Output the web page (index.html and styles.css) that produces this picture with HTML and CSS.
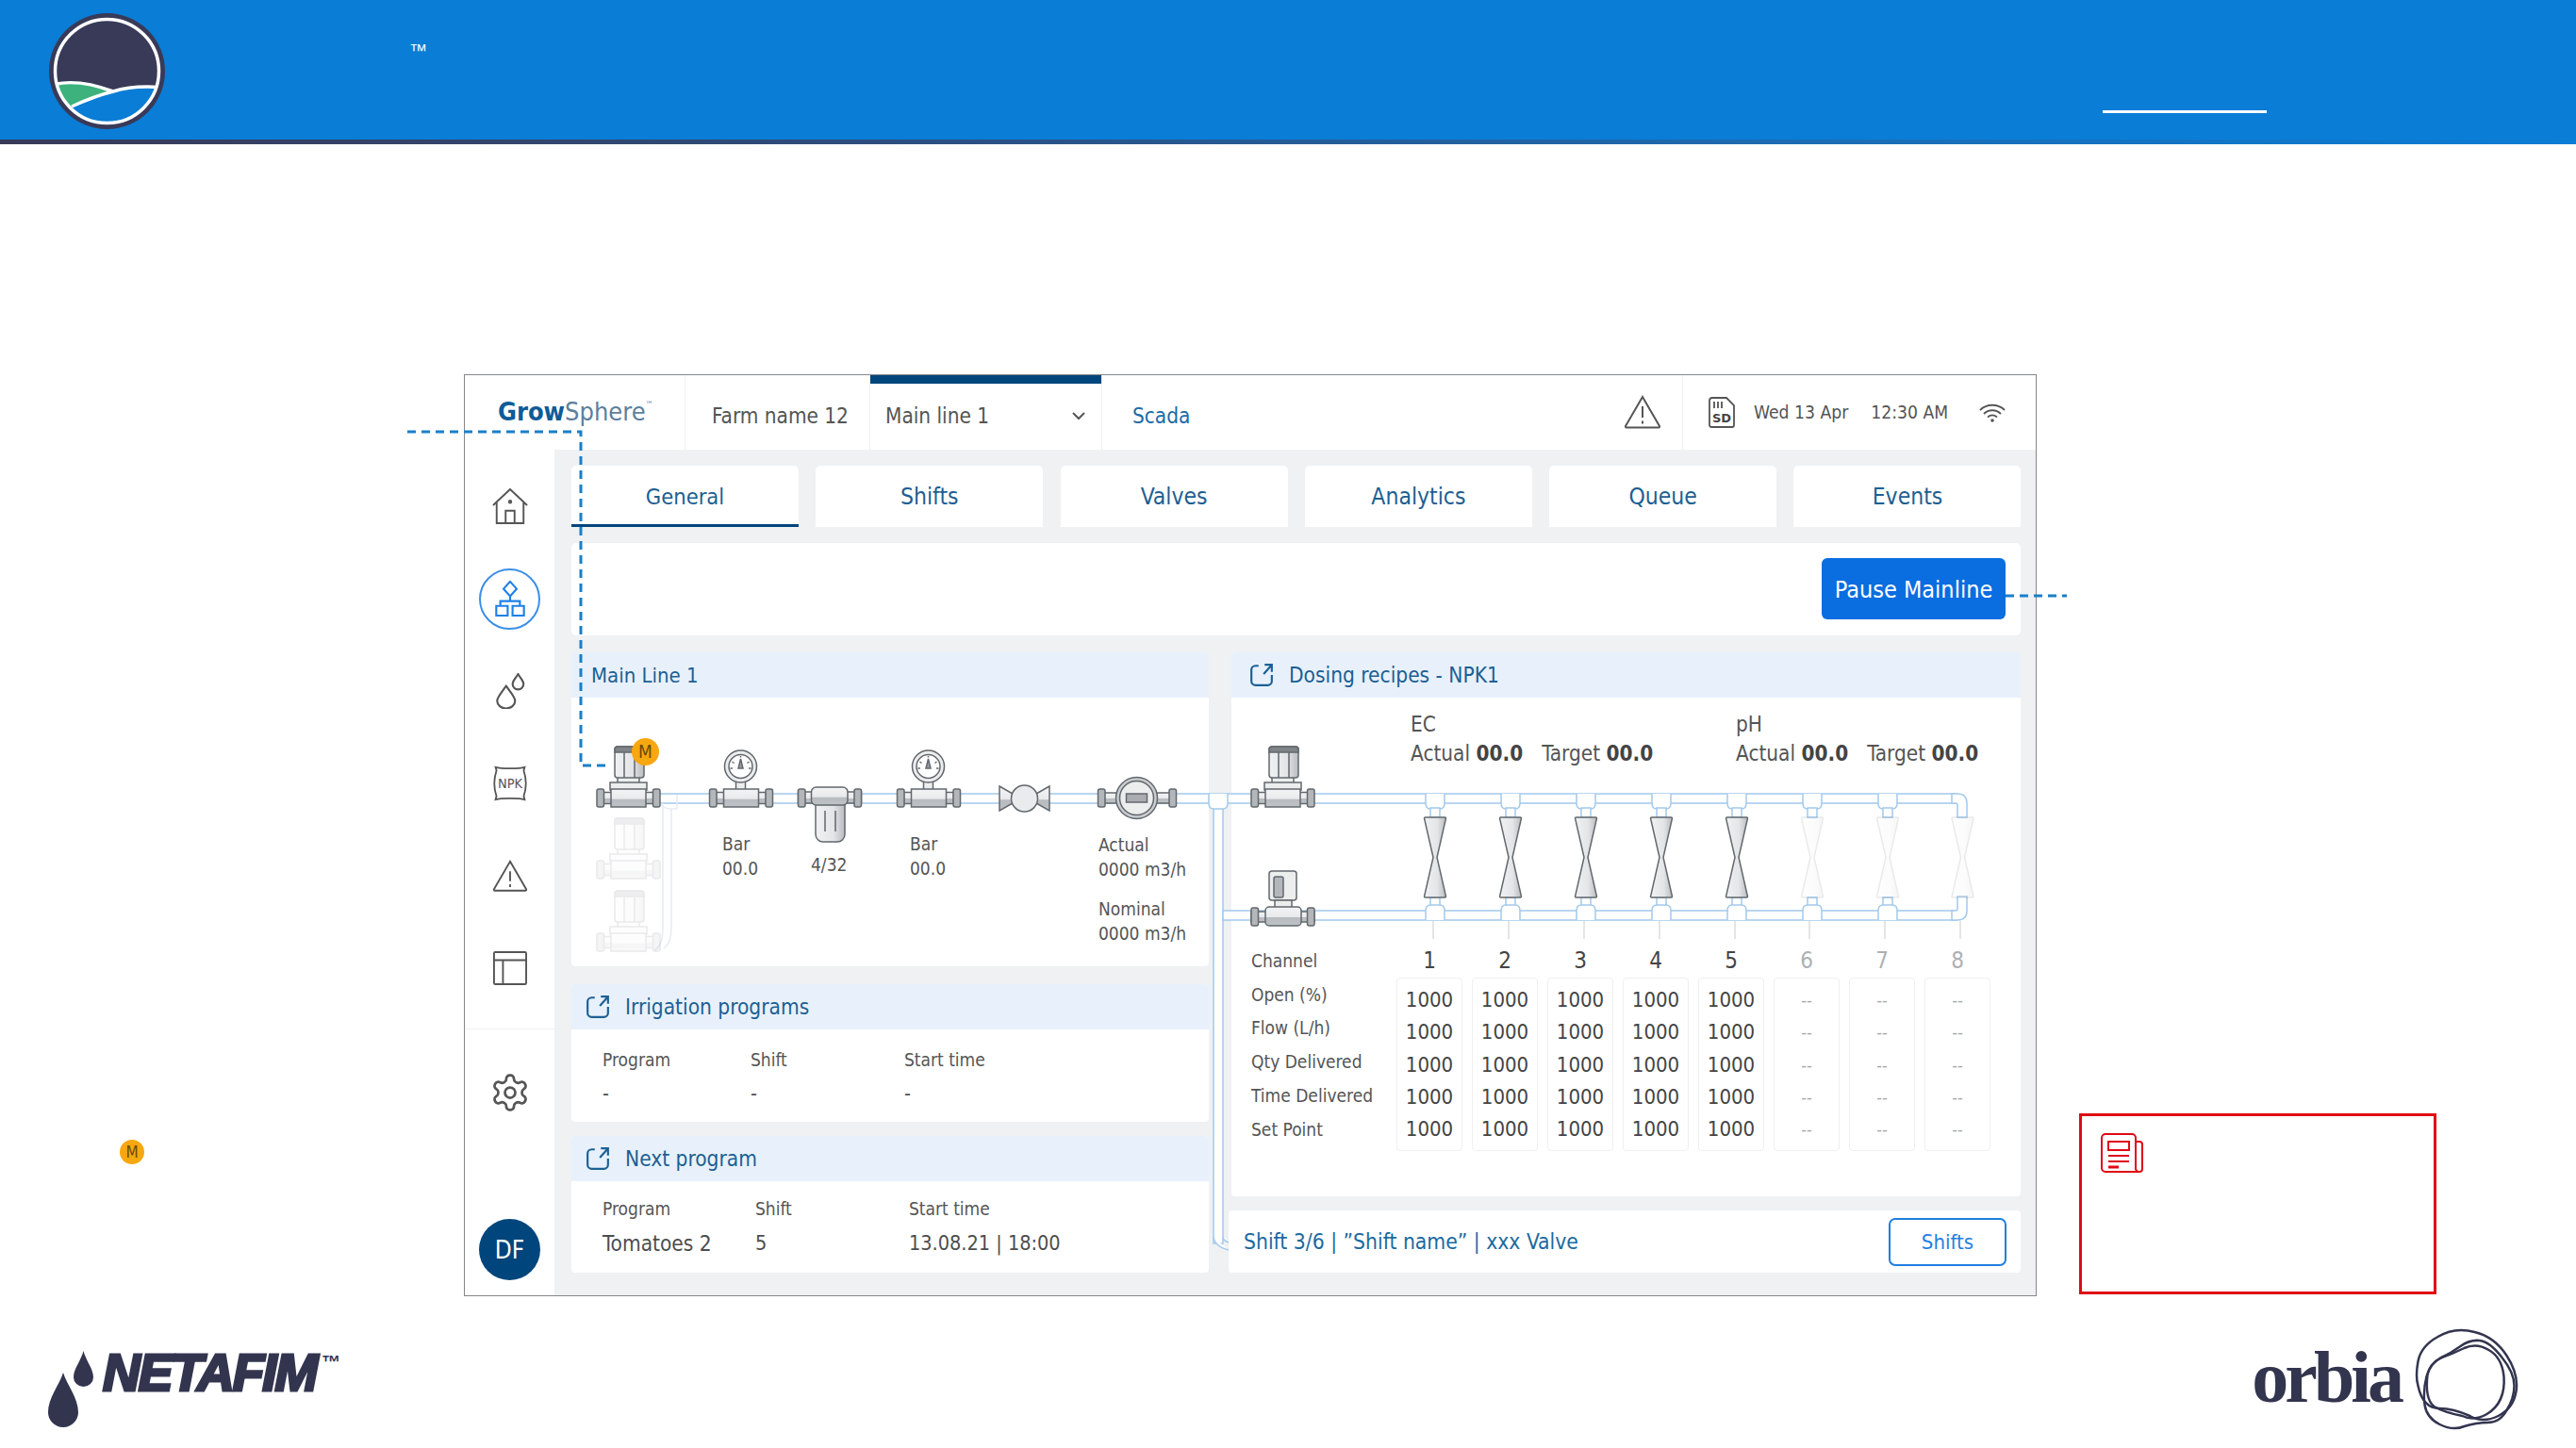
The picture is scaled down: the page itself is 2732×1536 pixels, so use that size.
FILE: index.html
```html
<!DOCTYPE html>
<html lang="en">
<head>
<meta charset="utf-8">
<title>GrowSphere Mainline</title>
<link rel="stylesheet" href="styles.css">
</head>
<body>
<header class="band">
  <svg class="band-logo" viewBox="0 0 123 123" aria-hidden="true">
    <defs><clipPath id="lens"><circle cx="61.5" cy="61.5" r="55"/></clipPath></defs>
    <circle cx="61.5" cy="61.5" r="61.5" fill="#383a58"/>
    <g clip-path="url(#lens)">
      <path d="M0,77 Q28,68 68,83 Q48,88 24,99 L0,99Z" fill="#3db27c"/>
      <path d="M24,99 Q48,88 68,83 Q90,76 123,79 V123 H0Z" fill="#0a7dd6"/>
      <path d="M0,77 Q28,68 68,83 M24,99 Q48,88 68,83 Q90,76 123,79" fill="none" stroke="#fff" stroke-width="3.5"/>
    </g>
    <circle cx="61.5" cy="61.5" r="55" fill="none" stroke="#fff" stroke-width="3.5"/>
  </svg>
  <span class="band-tm">™</span>
  <span class="band-rule"></span>
</header>

<main class="stage">
  <aside class="legend"><span class="m-badge">M</span></aside>

  <section class="app">
    <div class="app-top">
      <div class="brand"><b>Grow</b>Sphere<sup>™</sup></div>
      <div class="farm">Farm name 12</div>
      <div class="line-select">Main line 1
        <svg class="chev" viewBox="0 0 16 10" aria-hidden="true"><path d="M2 2l6 6 6-6"/></svg>
      </div>
      <a class="scada-link">Scada</a>
      <svg class="top-warn" viewBox="0 0 40 36" aria-hidden="true">
        <path d="M20 2L38 33a1 1 0 0 1-1 1.5H3a1 1 0 0 1-1-1.5Z"/><path d="M20 12v12M20 27.5v3"/>
      </svg>
      <div class="status">
        <svg class="sd" viewBox="0 0 28 33" aria-hidden="true">
          <path d="M4 1h15l8 8v21a2 2 0 0 1-2 2H3a2 2 0 0 1-2-2V4a3 3 0 0 1 3-3Z"/>
          <path d="M6 5v7M10 5v7M14 5v7"/>
          <text x="14" y="27">SD</text>
        </svg>
        <span class="date">Wed 13 Apr</span>
        <span class="time">12:30 AM</span>
        <svg class="wifi" viewBox="0 0 30 20" aria-hidden="true">
          <path d="M2 7C9 0 21 0 28 7M6 11C11 6 19 6 24 11M10 14.5C13 12 17 12 20 14.5"/>
          <circle cx="15" cy="18" r="1.8"/>
        </svg>
      </div>
    </div>

    <div class="app-body">
      <nav class="side">
        <div class="nav-item">
          <svg viewBox="0 0 40 40" aria-hidden="true"><path d="M1 19L20 1l19 18M5 16v23h30V16M15 39V25h10v14"/><circle cx="20" cy="15" r="1.3"/></svg>
        </div>
        <div class="nav-item">
          <span class="nav-active">
            <svg viewBox="2 0 36 44" aria-hidden="true"><path d="M20 1l8 9-8 9-8-9ZM20 19v6M8 31v-6h24v6M3 31h14v12H3ZM23 31h14v12H23Z"/></svg>
          </span>
        </div>
        <div class="nav-item">
          <svg viewBox="0 0 30 36" aria-hidden="true"><path d="M11 13c5 7 9 11 9 15a9 7.5 0 0 1-18 0c0-4 4-8 9-15ZM23 1c3 5 5.5 7 5.5 10a5.5 5.5 0 0 1-11 0C17.5 8 20 6 23 1Z"/></svg>
        </div>
        <div class="nav-item">
          <svg viewBox="0 0 40 42" aria-hidden="true"><path d="M3 2c6 2 28 2 34 0l-1 4c3 9 3 21 0 30l1 4c-6-2-28-2-34 0l1-4C1 27 1 15 4 6Z"/><text class="npk" x="20" y="27">NPK</text></svg>
        </div>
        <div class="nav-item">
          <svg viewBox="0 0 40 36" aria-hidden="true"><path d="M20 2L38 33a1 1 0 0 1-1 1.5H3a1 1 0 0 1-1-1.5Z"/><path d="M20 13v11M20 27.5v3"/></svg>
        </div>
        <div class="nav-item">
          <svg class="nav-table" viewBox="0 0 38 38" aria-hidden="true"><rect x="1" y="1" width="36" height="36" rx="1.5"/><path d="M1 10h36M11 10v27"/></svg>
        </div>
        <div class="nav-gap"></div>
        <div class="nav-gear">
          <svg viewBox="0 0 24 24" aria-hidden="true"><path d="M12.22 2h-.44a2 2 0 0 0-2 2v.18a2 2 0 0 1-1 1.73l-.43.25a2 2 0 0 1-2 0l-.15-.08a2 2 0 0 0-2.73.73l-.22.38a2 2 0 0 0 .73 2.73l.15.1a2 2 0 0 1 1 1.72v.51a2 2 0 0 1-1 1.74l-.15.09a2 2 0 0 0-.73 2.73l.22.38a2 2 0 0 0 2.73.73l.15-.08a2 2 0 0 1 2 0l.43.25a2 2 0 0 1 1 1.73V20a2 2 0 0 0 2 2h.44a2 2 0 0 0 2-2v-.18a2 2 0 0 1 1-1.73l.43-.25a2 2 0 0 1 2 0l.15.08a2 2 0 0 0 2.73-.73l.22-.39a2 2 0 0 0-.73-2.73l-.15-.08a2 2 0 0 1-1-1.74v-.5a2 2 0 0 1 1-1.74l.15-.09a2 2 0 0 0 .73-2.73l-.22-.38a2 2 0 0 0-2.73-.73l-.15.08a2 2 0 0 1-2 0l-.43-.25a2 2 0 0 1-1-1.73V4a2 2 0 0 0-2-2z"/><circle cx="12" cy="12" r="3"/></svg>
        </div>
        <div class="avatar">DF</div>
      </nav>

      <div class="content">
        <div class="tabs">
          <button class="tab tab-on">General</button>
          <button class="tab">Shifts</button>
          <button class="tab">Valves</button>
          <button class="tab">Analytics</button>
          <button class="tab">Queue</button>
          <button class="tab">Events</button>
        </div>
        <div class="actions"><button class="pause">Pause Mainline</button></div>

        <div class="columns">
          <div class="col-left">
            <section class="card card-main">
              <h3 class="card-head head-plain">Main Line 1</h3>
              <div class="diagram">
                <div class="lab lab-bar1">Bar<br>00.0</div>
                <div class="lab lab-filter">4/32</div>
                <div class="lab lab-bar2">Bar<br>00.0</div>
                <div class="lab lab-actual">Actual<br>0000 m3/h</div>
                <div class="lab lab-nominal">Nominal<br>0000 m3/h</div>
              </div>
            </section>
            <section class="card card-irr">
              <h3 class="card-head">
                <svg class="ext" viewBox="0 0 24 24" aria-hidden="true"><path d="M9 3H6a4 4 0 0 0-4 4v11a4 4 0 0 0 4 4h12a4 4 0 0 0 4-4v-6M15 2h7v7M22 2l-8 9"/></svg>
                Irrigation programs
              </h3>
              <div class="prog prog-irr">
                <span class="prog-l">Program</span><span class="prog-l">Shift</span><span class="prog-l">Start time</span>
                <span class="prog-v">-</span><span class="prog-v">-</span><span class="prog-v">-</span>
              </div>
            </section>
            <section class="card card-next">
              <h3 class="card-head">
                <svg class="ext" viewBox="0 0 24 24" aria-hidden="true"><path d="M9 3H6a4 4 0 0 0-4 4v11a4 4 0 0 0 4 4h12a4 4 0 0 0 4-4v-6M15 2h7v7M22 2l-8 9"/></svg>
                Next program
              </h3>
              <div class="prog prog-next">
                <span class="prog-l">Program</span><span class="prog-l">Shift</span><span class="prog-l">Start time</span>
                <span class="prog-v prog-name">Tomatoes 2</span><span class="prog-v">5</span><span class="prog-v">13.08.21 | 18:00</span>
              </div>
            </section>
          </div>

          <div class="col-right">
            <section class="card card-dose">
              <h3 class="card-head">
                <svg class="ext" viewBox="0 0 24 24" aria-hidden="true"><path d="M9 3H6a4 4 0 0 0-4 4v11a4 4 0 0 0 4 4h12a4 4 0 0 0 4-4v-6M15 2h7v7M22 2l-8 9"/></svg>
                Dosing recipes - NPK1
              </h3>
              <div class="targets">
                <div class="target"><div>EC</div><div><span class="t-a">Actual <b>00.0</b></span><span>Target <b>00.0</b></span></div></div>
                <div class="target"><div>pH</div><div><span class="t-a">Actual <b>00.0</b></span><span>Target <b>00.0</b></span></div></div>
              </div>
              <div class="chan-table">
                <div class="chan-labels">
                  <span>Channel</span><span>Open (%)</span><span>Flow (L/h)</span><span>Qty Delivered</span><span>Time Delivered</span><span>Set Point</span>
                </div>
                <div class="chan"><span class="chan-n">1</span><div class="chan-box"><span>1000</span><span>1000</span><span>1000</span><span>1000</span><span>1000</span></div></div>
                <div class="chan"><span class="chan-n">2</span><div class="chan-box"><span>1000</span><span>1000</span><span>1000</span><span>1000</span><span>1000</span></div></div>
                <div class="chan"><span class="chan-n">3</span><div class="chan-box"><span>1000</span><span>1000</span><span>1000</span><span>1000</span><span>1000</span></div></div>
                <div class="chan"><span class="chan-n">4</span><div class="chan-box"><span>1000</span><span>1000</span><span>1000</span><span>1000</span><span>1000</span></div></div>
                <div class="chan"><span class="chan-n">5</span><div class="chan-box"><span>1000</span><span>1000</span><span>1000</span><span>1000</span><span>1000</span></div></div>
                <div class="chan chan-off"><span class="chan-n">6</span><div class="chan-box"><span>--</span><span>--</span><span>--</span><span>--</span><span>--</span></div></div>
                <div class="chan chan-off"><span class="chan-n">7</span><div class="chan-box"><span>--</span><span>--</span><span>--</span><span>--</span><span>--</span></div></div>
                <div class="chan chan-off"><span class="chan-n">8</span><div class="chan-box"><span>--</span><span>--</span><span>--</span><span>--</span><span>--</span></div></div>
              </div>
            </section>
            <section class="card card-shift">
              <span class="shift-text">Shift 3/6 | ”Shift name” | xxx Valve</span>
              <button class="shift-btn">Shifts</button>
            </section>
          </div>

          <svg class="scada" viewBox="606 692 1537 658" aria-hidden="true">
            <defs>
              <linearGradient id="gv" x1="0" y1="0" x2="0" y2="1">
                <stop offset="0" stop-color="#f3f4f5"/><stop offset=".55" stop-color="#e8e9eb"/><stop offset=".56" stop-color="#b7bbbf"/><stop offset="1" stop-color="#bfc3c6"/>
              </linearGradient>
              <linearGradient id="gh" x1="0" y1="0" x2="1" y2="0">
                <stop offset="0" stop-color="#f0f1f2"/><stop offset=".6" stop-color="#e4e5e7"/><stop offset="1" stop-color="#b9bcc0"/>
              </linearGradient>
              <g id="run" class="sym">
                <rect x="7" y="3.5" width="53" height="12" fill="url(#gv)"/>
                <rect x="0" y="0" width="7.5" height="19" rx="2" fill="#b4b7ba"/>
                <rect x="59.5" y="0" width="7.5" height="19" rx="2" fill="#b4b7ba"/>
                <rect x="15" y="0" width="37" height="19" fill="url(#gv)"/>
              </g>
              <g id="pump" class="sym">
                <rect x="22" y="32" width="23" height="7" fill="#eceded"/>
                <rect x="19" y="0" width="31" height="33" rx="3" fill="url(#gh)"/>
                <path d="M19 6V3a3 3 0 0 1 3-3h25a3 3 0 0 1 3 3v3Z" fill="#808488"/>
                <path d="M29 6v27M40 6v27" fill="none"/>
                <rect x="14" y="38" width="39" height="8" fill="#eceded"/>
                <use href="#run" y="45"/>
              </g>
              <g id="gauge" class="sym">
                <rect x="28" y="33" width="10" height="9" fill="#eceded"/>
                <circle cx="33" cy="17" r="17" fill="#eceded"/>
                <circle cx="33" cy="17" r="12.5" fill="#fff"/>
                <path d="M33 9l2.5 10h-5ZM24 12l2 1.5M42 12l-2 1.5M22 19h2.5M44 19h-2.5M33 6v1.5" fill="#9a9ea2" stroke-width="1"/>
                <use href="#run" y="41"/>
              </g>
              <path id="junc" d="M-10 0V10Q-10 16 -5 16H5Q10 16 10 10V0" fill="#fff"/>
              <path id="hour" d="M1 0H22a1 1 0 0 1 1 1L13.5 42.5L23 84a1 1 0 0 1-1 1H1a1 1 0 0 1-1-1L9.5 42.5L0 1a1 1 0 0 1 1-1Z" fill="url(#gh)"/>
            </defs>

            <g class="pipe">
              <rect x="1287" y="847" width="10" height="472"/>
              <path d="M1287 1312Q1288 1322 1303 1326M1297 1312Q1297 1316 1303 1318" fill="none"/>
              <rect x="695" y="842" width="1380" height="10"/>
              <rect x="1297" y="966" width="778" height="10"/>
              <path d="M2070 842H2076Q2086 842 2086 852V867H2076V854Q2076 852 2074 852H2070Z"/>
              <path d="M2070 966H2074Q2076 966 2076 964V951H2086V966Q2086 976 2076 976H2070Z"/>
              <use href="#junc" x="1292" y="842"/>
              <g id="cross">
                <use href="#junc" x="1522" y="842"/><rect x="1517" y="857" width="10" height="10"/><rect x="1517" y="952" width="10" height="10"/><use href="#junc" transform="translate(1522 976) scale(1 -1)"/>
                <use href="#junc" x="1602" y="842"/><rect x="1597" y="857" width="10" height="10"/><rect x="1597" y="952" width="10" height="10"/><use href="#junc" transform="translate(1602 976) scale(1 -1)"/>
                <use href="#junc" x="1682" y="842"/><rect x="1677" y="857" width="10" height="10"/><rect x="1677" y="952" width="10" height="10"/><use href="#junc" transform="translate(1682 976) scale(1 -1)"/>
                <use href="#junc" x="1762" y="842"/><rect x="1757" y="857" width="10" height="10"/><rect x="1757" y="952" width="10" height="10"/><use href="#junc" transform="translate(1762 976) scale(1 -1)"/>
                <use href="#junc" x="1842" y="842"/><rect x="1837" y="857" width="10" height="10"/><rect x="1837" y="952" width="10" height="10"/><use href="#junc" transform="translate(1842 976) scale(1 -1)"/>
                <use href="#junc" x="1922" y="842"/><rect x="1917" y="857" width="10" height="10"/><rect x="1917" y="952" width="10" height="10"/><use href="#junc" transform="translate(1922 976) scale(1 -1)"/>
                <use href="#junc" x="2002" y="842"/><rect x="1997" y="857" width="10" height="10"/><rect x="1997" y="952" width="10" height="10"/><use href="#junc" transform="translate(2002 976) scale(1 -1)"/>
              </g>
            </g>
            <path class="ticks" d="M1520 977v19M1600 977v19M1680 977v19M1760 977v19M1840 977v19M1919 977v19M1999 977v19M2079 977v19"/>

            <g class="ghost-pipe">
              <path d="M703 852V985Q703 1003 694 1008M712 858V985Q712 1000 704 1006"/>
              <path d="M700 852Q703 858 712 858H718V843"/>
            </g>
            <g class="ghost">
              <use href="#pump" x="633" y="868"/>
              <use href="#pump" x="633" y="945"/>
              <use href="#hour" x="1910.5" y="867"/>
              <use href="#hour" x="1990.5" y="867"/>
              <use href="#hour" x="2070" y="867"/>
            </g>

            <use href="#pump" x="633" y="792"/>
            <use href="#gauge" x="752.5" y="796"/>
            <g class="sym">
              <rect x="846.5" y="840" width="67" height="12" fill="url(#gv)"/>
              <rect x="846.5" y="837" width="7.5" height="19" rx="2" fill="#b4b7ba"/>
              <rect x="906" y="837" width="7.5" height="19" rx="2" fill="#b4b7ba"/>
              <path d="M865 853V885a8 8 0 0 0 8 8h15a8 8 0 0 0 8-8V853Z" fill="url(#gh)"/>
              <rect x="860.5" y="835" width="38.5" height="19" rx="5" fill="url(#gv)"/>
              <path d="M875 860v22M886 860v22" fill="none"/>
            </g>
            <use href="#gauge" x="951.5" y="796"/>
            <g class="sym">
              <path d="M1060 834L1074 842V852L1060 860Z" fill="url(#gv)"/>
              <path d="M1113 834L1099 842V852L1113 860Z" fill="url(#gv)"/>
              <circle cx="1086.5" cy="847" r="14" fill="#e9ebec"/>
            </g>
            <g class="sym">
              <rect x="1170" y="841" width="72" height="11" fill="url(#gv)"/>
              <rect x="1164.5" y="837" width="7.5" height="19" rx="2" fill="#b4b7ba"/>
              <rect x="1240" y="837" width="7.5" height="19" rx="2" fill="#b4b7ba"/>
              <circle cx="1205.5" cy="846.5" r="22" fill="#c9ccd0"/>
              <circle cx="1205.5" cy="846.5" r="18" fill="#eceded"/>
              <rect x="1194.5" y="842" width="22" height="9" fill="#a9adb1"/>
            </g>

            <use href="#pump" x="1327" y="792"/>
            <g class="sym">
              <rect x="1346" y="924" width="29" height="31" rx="3" fill="#eceded"/>
              <rect x="1351" y="930" width="10" height="22" rx="2" fill="#b4b7ba"/>
              <rect x="1352" y="955" width="18" height="8" fill="#eceded"/>
              <rect x="1327" y="967" width="67" height="11" fill="url(#gv)"/>
              <rect x="1327" y="963" width="7.5" height="19" rx="2" fill="#b4b7ba"/>
              <rect x="1386.5" y="963" width="7.5" height="19" rx="2" fill="#b4b7ba"/>
              <rect x="1342" y="962" width="38" height="20" rx="4" fill="url(#gv)"/>
            </g>
            <g class="sym">
              <use href="#hour" x="1510.5" y="867"/>
              <use href="#hour" x="1590.5" y="867"/>
              <use href="#hour" x="1670.5" y="867"/>
              <use href="#hour" x="1750.5" y="867"/>
              <use href="#hour" x="1830.5" y="867"/>
            </g>
          </svg>
          <span class="m-badge m-on-pump">M</span>
        </div>
      </div>
    </div>
  </section>

  <aside class="note">
    <svg class="note-icon" viewBox="0 0 45 42" aria-hidden="true">
      <path d="M37 9h4a3 3 0 0 1 3 3v26a3 3 0 0 1-3 3H5a4 4 0 0 1-4-4V5a4 4 0 0 1 4-4h28a4 4 0 0 1 4 4v31a4 4 0 0 0 3.5 5"/>
      <rect x="8" y="9" width="22" height="9"/>
      <path d="M8 24h22M8 30h22"/>
      <path class="note-short" d="M8 36h11"/>
    </svg>
  </aside>
</main>

<footer class="foot">
  <div class="netafim">
    <svg class="drops" viewBox="0 0 48 81" aria-hidden="true">
      <path d="M16 23C20 36 32 50 32 65A16 16 0 0 1 0 65C0 50 12 36 16 23Z"/>
      <path d="M37.5 0C40 10 48 19 48 28A10.5 10 0 0 1 27 28C27 19 35 10 37.5 0Z"/>
    </svg>
    <span class="netafim-word">NETAFIM</span><span class="netafim-tm">™</span>
  </div>
  <div class="orbia">
    <span class="orbia-word">orbia</span>
    <svg class="rings" viewBox="-1 -3 111 112" aria-hidden="true">
      <path d="M3 34Q6 18 24 8Q42 -3 63 3Q84 8 97 28Q110 48 107 66Q104 84 88 92Q72 100 58 92Q40 84 26 84Q8 84 3 60Q0 50 3 34Z"/>
      <path d="M13 48Q16 36 28 30Q40 26 52 20Q65 14 78 22Q92 30 94 50Q96 78 76 90Q62 98 50 92Q30 88 20 82Q10 74 13 48Z"/>
      <path d="M10 80Q12 94 26 101Q40 108 52 103Q65 99 77 99Q90 99 97 86Q105 73 105 60Q105 46 92 30Q79 13 68 12Q58 11 48 18Q37 26 26 31Q16 36 12 50Q8 66 10 80Z"/>
    </svg>
  </div>
</footer>

<svg class="callouts" viewBox="0 0 2732 1536" aria-hidden="true">
  <path d="M432 458H616V812H647"/>
  <path d="M2127 632H2192"/>
</svg>
</body>
</html>
```

FILE: styles.css
```css
* { box-sizing: border-box; }
html, body { margin: 0; padding: 0; }
body {
  width: 2732px;
  height: 1536px;
  overflow: hidden;
  position: relative;
  background: #fff;
  color: #555;
  font-family: "DejaVu Sans Condensed", "DejaVu Sans", sans-serif;
  font-stretch: condensed;
}
button { font: inherit; font-stretch: inherit; border: 0; padding: 0; background: none; }
svg { display: block; }

/* band */
.band {
  height: 153px;
  display: flex;
  align-items: flex-start;
  background: #0a7dd6;
  padding: 14px 0 0 52px;
  position: relative;
  border-image: linear-gradient(90deg, #383a58 0, #2f4a78 30%, #1c6cb4 70%, #0a7dd6 100%) 1;
  border-bottom: 5px solid;
}
.band-logo { width: 123px; height: 123px; flex: none; }
.band-tm {
  margin: 30px 0 0 259px;
  color: #fff;
  font: 19px/1 "Liberation Sans", sans-serif;
}
.band-rule {
  margin: 103px 328px 0 auto;
  width: 174px;
  height: 3px;
  background: #fff;
}

/* stage */
.stage { display: flex; align-items: flex-end; padding-top: 244px; }
.legend { width: 492px; flex: none; padding: 0 0 140px 127px; }
.m-badge {
  display: flex;
  align-items: center;
  justify-content: center;
  width: 26px;
  height: 26px;
  border-radius: 50%;
  background: #f7a70f;
  color: #6b4a06;
  font-size: 17px;
  line-height: 1;
}

.app {
  width: 1668px;
  height: 978px;
  flex: none;
  border: 1px solid #85878a;
  display: flex;
  flex-direction: column;
  background: #eff1f3;
}
.app-top {
  height: 79px;
  flex: none;
  background: #fff;
  display: flex;
  align-items: center;
  color: #555;
  font-size: 22.4px;
}
.brand {
  width: 234px;
  height: 100%;
  padding: 24px 0 0 35px;
  font-size: 27px;
  line-height: 30px;
  color: #5d7f9c;
  border-right: 1px solid #f0f1f2;
}
.brand b { color: #0e5b97; }
.brand sup { font-size: 9px; vertical-align: 14px; line-height: 0; }
.farm {
  width: 195px;
  height: 100%;
  padding: 6px 0 0 28px;
  display: flex;
  align-items: center;
}
.line-select {
  width: 247px;
  height: 100%;
  padding: 6px 16px 0 16px;
  display: flex;
  align-items: center;
  justify-content: space-between;
  border: solid #f0f1f2;
  border-width: 0 1px;
  position: relative;
  box-shadow: inset 0 9px 0 #00457c;
}
.chev { width: 16px; height: 10px; fill: none; stroke: #555; stroke-width: 2; }
.scada-link { margin: 6px 0 0 32px; color: #1b6ca8; }
.top-warn {
  margin: 0 0 2px auto;
  width: 40px;
  height: 36px;
  fill: none;
  stroke: #555;
  stroke-width: 2;
}
.status {
  margin-left: 22px;
  height: 100%;
  width: 375px;
  border-left: 1px solid #f0f1f2;
  display: flex;
  align-items: center;
  padding-left: 27px;
  font-size: 19.2px;
}
.sd { width: 28px; height: 33px; fill: none; stroke: #555; stroke-width: 1.8; }
.sd text { fill: #444; stroke: none; font: bold 13px "DejaVu Sans", sans-serif; text-anchor: middle; }
.date { margin-left: 20px; }
.time { margin-left: 24px; }
.wifi { margin-left: 32px; width: 30px; height: 20px; fill: none; stroke: #555; stroke-width: 1.8; }
.wifi circle { fill: #555; stroke: none; }

.app-body { flex: 1; display: flex; min-height: 0; }
.side {
  width: 95px;
  flex: none;
  background: #fff;
  display: flex;
  flex-direction: column;
  align-items: center;
  padding: 11px 0 16px;
}
.nav-item { height: 98px; width: 100%; display: flex; align-items: center; justify-content: center; }
.nav-item svg, .nav-gear svg { width: 38px; height: 38px; fill: none; stroke: #555; stroke-width: 2; }
.nav-item svg .npk { fill: #555; stroke: none; font-size: 16px; text-anchor: middle; }
.nav-item .nav-table { width: 36px; height: 36px; }
.nav-active {
  width: 65px;
  height: 65px;
  border-radius: 50%;
  border: 2px solid #3d8fe8;
  display: flex;
  align-items: center;
  justify-content: center;
}
.nav-item .nav-active svg { stroke: #1f80e8; width: 32px; height: 38px; stroke-width: 2.5; }
.nav-gap { width: 100%; height: 16px; border-bottom: 1px solid #f0f1f2; }
.nav-gear { margin-top: 45px; }
.nav-gear svg { width: 44px; height: 44px; stroke-width: 1.5; }
.avatar {
  margin-top: auto;
  width: 65px;
  height: 65px;
  border-radius: 50%;
  background: #00457c;
  color: #fff;
  font-size: 26px;
  display: flex;
  align-items: center;
  justify-content: center;
}

.content { flex: 1; min-width: 0; padding: 17px 16px 0 18px; }
.tabs { display: grid; grid-template-columns: repeat(6, 241px); column-gap: 18.3px; height: 65px; }
.tab { background: #fff; color: #1d5f92; font-size: 24.5px; border-radius: 5px 5px 0 0; }
.tab-on { border-bottom: 3px solid #00457c; border-radius: 5px 5px 0 0; padding-top: 3px; font-size: 23.5px; }
.actions {
  margin-top: 17px;
  height: 98px;
  background: #fff;
  border-radius: 5px;
  padding: 16px 16px 0 0;
  display: flex;
  justify-content: flex-end;
  align-items: flex-start;
}
.pause {
  width: 195px;
  height: 65px;
  background: #0a6de0;
  color: #fff;
  font-size: 25px;
  border-radius: 6px;
  padding-top: 2px;
}

.columns {
  margin-top: 18px;
  display: grid;
  grid-template-columns: 676px 840px;
  column-gap: 21px;
  position: relative;
  height: 658px;
}
.col-left, .col-right { display: flex; flex-direction: column; }
.card { background: #fff; border-radius: 4px; }
.card-head {
  margin: 0;
  height: 48px;
  background: #e8f1fb;
  color: #1c6094;
  font-size: 22.5px;
  font-weight: 400;
  display: flex;
  align-items: center;
  padding-left: 15px;
  border-radius: 4px 4px 0 0;
}
.head-plain { font-size: 22px; padding-left: 21px; }
.ext { width: 26px; height: 26px; margin-right: 16px; fill: none; stroke: #1c6094; stroke-width: 2; flex: none; }
.card-main { height: 333px; }
.diagram { position: relative; height: 285px; }
.lab { position: absolute; font-size: 19px; line-height: 25.5px; color: #555; white-space: nowrap; }
.lab-bar1 { left: 160px; top: 143px; }
.lab-filter { left: 254px; top: 165px; }
.lab-bar2 { left: 359px; top: 143px; }
.lab-actual { left: 559px; top: 144px; }
.lab-nominal { left: 559px; top: 212px; }

.card-irr { height: 146px; margin-top: 19px; }
.card-next { height: 145px; margin-top: 15px; }
.prog { display: grid; padding: 20px 0 0 33px; row-gap: 11px; }
.prog-irr { grid-template-columns: 157px 163px 1fr; }
.prog-next { grid-template-columns: 162px 163px 1fr; row-gap: 12px; padding-top: 17px; }
.prog-l { font-size: 19px; line-height: 24px; }
.prog-v { font-size: 21.5px; line-height: 26px; color: #4d4d4d; }
.prog-name { font-size: 22.5px; }

.card-dose { height: 577px; margin-left: 3px; }
.card-dose .card-head { padding-left: 19px; font-size: 22.5px; }
.targets { display: flex; padding: 13px 0 0 190px; height: 75px; font-size: 22.4px; line-height: 31px; color: #555; }
.target { width: 345px; flex: none; }
.t-a { margin-right: 20px; }
.target b { color: #444; }
.chan-table {
  margin-top: 186px;
  display: grid;
  grid-template-columns: 144px repeat(8, 70px);
  column-gap: 10px;
  padding-left: 21px;
}
.chan-labels { display: flex; flex-direction: column; font-size: 19px; }
.chan-labels span { height: 35.8px; display: flex; align-items: center; }
.chan-n { display: flex; height: 36px; align-items: center; justify-content: center; font-size: 24px; color: #444; }
.chan-box {
  height: 184px;
  padding-top: 5.5px;
  border: 1px solid #eef0f1;
  border-radius: 4px;
  display: flex;
  flex-direction: column;
  align-items: center;
  font-size: 22px;
  color: #444;
}
.chan-box span { height: 34.3px; display: flex; align-items: center; }
.chan-off .chan-n { color: #adb0b3; }
.chan-off .chan-box { color: #a5a8ab; font-size: 18px; }

.card-shift {
  height: 66px;
  margin-top: 15px;
  display: flex;
  align-items: center;
  justify-content: space-between;
  padding: 0 15px 0 16px;
  color: #1c6aa0;
  font-size: 22.7px;
}
.shift-btn {
  width: 125px;
  height: 51px;
  border: 2px solid #1f7fe0;
  border-radius: 7px;
  color: #1f7fe0;
  font-size: 22px;
  background: #fff;
}

/* scada canvas */
.scada { position: absolute; left: 0; top: 0; width: 1537px; height: 658px; pointer-events: none; }
.sym, .sym rect, .sym path, .sym circle, #hour { stroke: #62686d; stroke-width: 1.5; }
.pipe rect, .pipe path, .pipe use { fill: #fff; stroke: #a3c9ec; stroke-width: 1.5; }
.ticks { fill: none; stroke: #ddd; stroke-width: 1.5; }
.ghost-pipe path { fill: none; stroke: #e6ecf2; stroke-width: 1.5; }
.ghost { opacity: .14; }
.m-on-pump { position: absolute; left: 64px; top: 91px; width: 29px; height: 29px; font-size: 19px; }

/* note */
.note {
  margin: 0 0 2px 45px;
  width: 379px;
  height: 192px;
  border: 3px solid #df0a14;
  padding: 18px 0 0 20px;
}
.note-icon { width: 45px; height: 42px; fill: none; stroke: #df0a14; stroke-width: 2; }
.note-short { stroke-width: 3; }

/* footer */
.foot {
  position: absolute;
  left: 0;
  right: 0;
  top: 1400px;
  display: flex;
  justify-content: space-between;
}
.netafim { display: flex; align-items: flex-start; padding: 33px 0 0 51px; }
.drops { width: 48px; height: 81px; fill: #33354f; flex: none; }
.netafim-word {
  margin: -1px 0 0 10px;
  font: italic 700 55px/48px "Liberation Sans", sans-serif;
  letter-spacing: -2px;
  color: #33354f;
  -webkit-text-stroke: 3px #33354f;
}
.netafim-tm { margin: 2px 0 0 6px; font: 700 20px/1 "Liberation Sans", sans-serif; color: #33354f; }
.orbia { display: flex; align-items: flex-start; padding: 7px 60px 0 0; }
.orbia-word {
  margin-top: 15px;
  font: 700 78px/78px "Liberation Serif", serif;
  letter-spacing: -4px;
  color: #33354f;
}
.rings { margin-left: 14px; width: 112px; height: 112px; fill: none; stroke: #33354f; stroke-width: 2.5; }

.callouts {
  position: absolute;
  left: 0;
  top: 0;
  width: 2732px;
  height: 1536px;
  pointer-events: none;
  fill: none;
  stroke: #1a7fc8;
  stroke-width: 3;
  stroke-dasharray: 9 6;
}
```
